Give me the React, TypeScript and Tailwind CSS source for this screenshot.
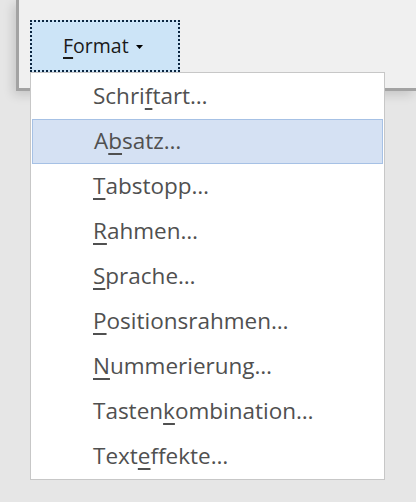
import * as React from "react"

type Item = { pre: string; key: string; post: string; active?: boolean }

const items: Item[] = [
  { pre: "Schri", key: "f", post: "tart…" },
  { pre: "A", key: "b", post: "satz…", active: true },
  { pre: "", key: "T", post: "abstopp…" },
  { pre: "", key: "R", post: "ahmen…" },
  { pre: "", key: "S", post: "prache…" },
  { pre: "", key: "P", post: "ositionsrahmen…" },
  { pre: "", key: "N", post: "ummerierung…" },
  { pre: "Tasten", key: "k", post: "ombination…" },
  { pre: "Text", key: "e", post: "ffekte…" },
]

function Mnemonic({ children }: { children: React.ReactNode }) {
  return <span className="underline decoration-2 underline-offset-[4px]">{children}</span>
}

export default function App() {
  return (
    <div
      className="relative h-[502px] w-[416px] overflow-hidden bg-[#e6e6e6]"
      style={{ fontFamily: '"Open Sans", "Noto Sans", sans-serif' }}
    >
      {/* dialog behind */}
      <div className="ml-[16px] h-[91px] border-b-[3px] border-l-[3px] border-[#a3a3a3] bg-[#f0f0f0] pl-[11px] pt-[20px] shadow-[-3px_4px_10px_rgba(0,0,0,0.14)]">
        <button className="flex h-[52px] w-[150px] items-center border-2 border-dotted border-[#0a2540] bg-[#cce4f7] pl-[31px] text-[19.5px] leading-none text-[#1a1a1a]">
          <span>
            <Mnemonic>F</Mnemonic>ormat
          </span>
          <svg className="ml-[7px] mt-[2px]" width="7" height="4" viewBox="0 0 7 4">
            <path d="M0 0h7L3.5 4z" fill="#000" />
          </svg>
        </button>
      </div>

      {/* dropdown menu */}
      <div className="absolute left-[30px] top-[72px] flex h-[408px] w-[355px] flex-col border border-[#c7c7c7] bg-white pt-[1px]">
        {items.map((it) => (
          <div
            key={it.post}
            className={
              "mx-[1px] flex h-[45px] shrink-0 items-center pl-[61px] text-[22.5px] leading-none text-[#505050] " +
              (it.active ? "border border-[#a6c1e5] bg-[#d5e1f3] pl-[60px]" : "")
            }
          >
            <span>
              {it.pre}
              <Mnemonic>{it.key}</Mnemonic>
              {it.post}
            </span>
          </div>
        ))}
      </div>
    </div>
  )
}
